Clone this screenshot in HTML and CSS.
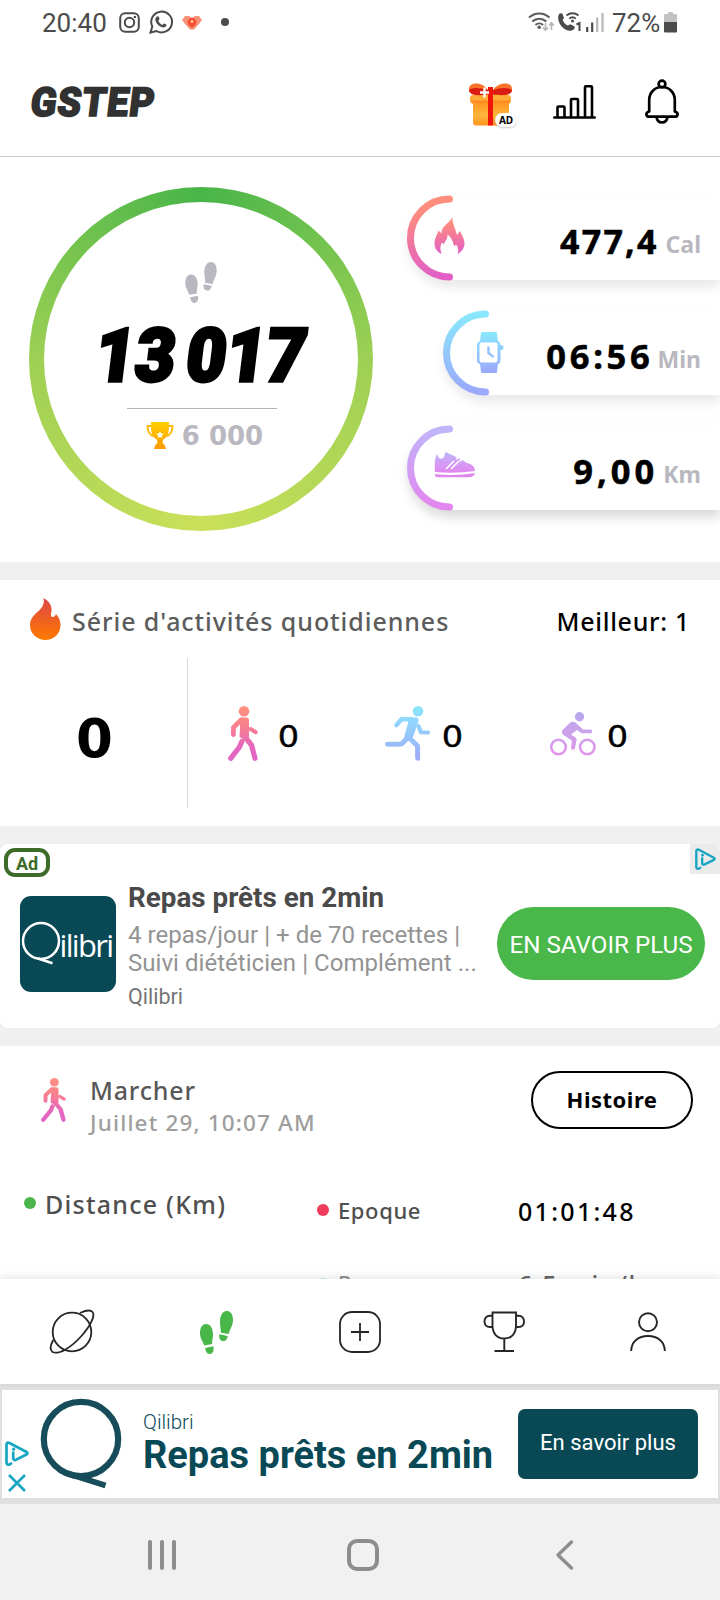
FILE: index.html
```html
<!DOCTYPE html>
<html lang="fr">
<head>
<meta charset="utf-8">
<title>GStep</title>
<link rel="stylesheet" href="styles.css">
</head>
<body>
<svg class="defs" width="0" height="0" aria-hidden="true">
  <defs>
    <linearGradient id="pink" x1="0" y1="0" x2="0" y2="1"><stop offset="0" stop-color="#ff8f7d"/><stop offset=".2" stop-color="#fd8a80"/><stop offset="1" stop-color="#e15fc6"/></linearGradient>
    <linearGradient id="blue" x1="0" y1="0" x2="0" y2="1"><stop offset="0" stop-color="#89e8fd"/><stop offset="1" stop-color="#9ba8fb"/></linearGradient>
    <linearGradient id="violet" x1="0" y1="0" x2="0" y2="1"><stop offset="0" stop-color="#c0b5fa"/><stop offset="1" stop-color="#e386ef"/></linearGradient>
    <linearGradient id="bike" gradientUnits="userSpaceOnUse" x1="0" y1="0" x2="0" y2="44"><stop offset="0" stop-color="#b6aaec"/><stop offset="1" stop-color="#e295ea"/></linearGradient>
    <linearGradient id="walk" gradientUnits="userSpaceOnUse" x1="0" y1="0" x2="0" y2="55"><stop offset="0" stop-color="#ff9180"/><stop offset=".35" stop-color="#f9818c"/><stop offset=".75" stop-color="#e466bf"/><stop offset="1" stop-color="#e266c6"/></linearGradient>
    <linearGradient id="run" gradientUnits="userSpaceOnUse" x1="0" y1="0" x2="0" y2="55"><stop offset="0" stop-color="#89e8fd"/><stop offset="1" stop-color="#a0a9f9"/></linearGradient>
    <linearGradient id="gold" x1="0" y1="0" x2="0" y2="1"><stop offset="0" stop-color="#fdd000"/><stop offset="1" stop-color="#fd9a08"/></linearGradient>
    <linearGradient id="fire" x1="0" y1="0" x2="0" y2="1"><stop offset="0" stop-color="#dc4646"/><stop offset="1" stop-color="#ff7a00"/></linearGradient>
    <linearGradient id="box" x1="0" y1="0" x2="0" y2="1"><stop offset="0" stop-color="#ff9420"/><stop offset=".55" stop-color="#ffb53c"/><stop offset="1" stop-color="#ff9420"/></linearGradient>
    <symbol id="steps" viewBox="0 0 33 43">
      <path d="M6 13C1.800 13 0 17.500 0 22c0 5.500 3 8.500 4.200 12.400l8-1.400c-.4-3.500.8-6 .8-9.500C13 17.500 10.500 13 6 13z"/>
      <path d="M5.300 37l8-1.700c.8 3.600.1 7.200-3.300 7.600-3.100.3-4.700-2.700-4.700-5.900z"/>
      <path d="M27 0c4.200 0 6 4.500 6 9 0 5.500-3 8.500-4.200 14.100l-8-1.400c.4-3.500-.8-6-.8-10.500C20 4.500 22.500 0 27 0z"/>
      <path d="M19.400 23.300l8.300 1.600c-.4 3.500-2.200 5.600-5 5.100-3-.5-3.900-3.400-3.300-6.700z"/>
    </symbol>
    <symbol id="walker" viewBox="0 0 30 55">
      <circle cx="16" cy="5.300" r="5.300" fill="url(#walk)"/>
      <path fill="url(#walk)" d="M12.500 11.500H18q3 0 3 3V31l-3 3.500L11.500 31z"/>
      <g fill="none" stroke="url(#walk)" stroke-linecap="round" stroke-linejoin="round"><path stroke-width="4.800" d="M13 14L5.500 21.500 5.400 28.500"/><path stroke-width="5.200" d="M17 31l6.500 8L27 52.300M13.800 35.500L11.500 41 2.700 52.300"/><path stroke-width="4" d="M22.500 23l5.200 3.300"/></g>
    </symbol>
    <symbol id="choices" viewBox="0 0 24 25">
      <path d="M6 22.500c-2 2-4.500 1.500-4.500-1V3.500C1.500 1.700 3 1.200 4.500 2l17 9c1.300.8 1.300 1.700 0 2.500L11 18.700c-2 .9-2.800-.1-2.800-1.700v-5.500" fill="none" stroke="#17a5c2" stroke-width="2.700" stroke-linecap="round" stroke-linejoin="round"/>
      <circle cx="8.600" cy="8.200" r="1.600" fill="#17a5c2"/>
    </symbol>
  </defs>
</svg>

<div class="status">
  <span class="status-text">20:40</span>
  <svg class="st-insta" width="21" height="21" viewBox="0 0 21 21" fill="none" stroke="#4b4b4b"><rect x="1.200" y="1.200" width="18.600" height="18.600" rx="5" stroke-width="2"/><circle cx="10.500" cy="10.500" r="4.700" stroke-width="2"/><circle cx="15.900" cy="5" r="1.300" fill="#4b4b4b" stroke="none"/></svg>
  <svg class="st-wa" width="24" height="24" viewBox="0 0 24 24"><path d="M1.500 22.500l1.800-6A10.400 10.400 0 1 1 7.500 21z" fill="none" stroke="#4b4b4b" stroke-width="2"/><path d="M8.200 6.500c1.400-.6 2 1 2.300 2.600L9.300 11c.9 1.900 2.200 3.100 4 3.900l1.600-1.500c2.200.5 3 1.200 2.400 2.400-1 2-3.300 2.200-6 .7-2.600-1.500-4.600-4-5-6.500-.2-1.500.6-2.900 1.900-3.500z" fill="#4b4b4b"/></svg>
  <svg class="st-heart" width="20" height="14" viewBox="0 0 20 14"><path d="M0 4l3-4h4l3 2 3-2h4l3 4-3 4-5 5.500h-4L3 8z" fill="#f9927b"/><path d="M5.500 5L8 2h4l2.500 3-1 4L10 12 6.500 9z" fill="#f4502f"/><circle cx="10" cy="5.500" r="1.300" fill="#ffd9c4"/></svg>
  <span class="st-dot"></span>
  <svg class="st-wifi" width="26" height="20" viewBox="0 0 26 20" fill="none" stroke="#5a5a5a" stroke-width="2"><path d="M1 5.500c6-5.500 14.500-5.500 20.500 0M4.300 9.500c4-3.700 10-3.700 14 0M7.500 13c2.200-2 5.400-2 7.600 0"/><circle cx="11.200" cy="15.300" r="1.800" fill="#5a5a5a" stroke="none"/><path d="M17.500 11v7m-2.500-2.500l2.500 2.800 2.500-2.800M23.500 18v-7m-2.300 2.500l2.300-2.800 2.300 2.800" stroke="#b4b4b4" stroke-width="1.600"/></svg>
  <svg class="st-call" width="24" height="20" viewBox="0 0 24 20"><path d="M.8 2.500C2 .8 4 .8 4.800 2.600L6 6 4.600 8c1.200 2.800 3 4.600 5.300 5.600l2.300-1.400 4 2c1 .7.700 2.300-.8 3.600-2 1.500-5 1.400-8-.2C2.500 14.800-1.400 7.800.8 2.500z" fill="#4b4b4b"/><path d="M8.500 3.500c3.500-3 8.500-3 12 0M11.200 6.600c2-1.600 4.600-1.600 6.600 0" fill="none" stroke="#4b4b4b" stroke-width="1.800"/><circle cx="14.500" cy="9" r="1.500" fill="#4b4b4b"/><path d="M18.500 12.500l3-1.500v8" fill="none" stroke="#4b4b4b" stroke-width="2"/></svg>
  <svg class="st-signal" width="18" height="19" viewBox="0 0 18 19"><path d="M1.200 14v5M6.200 9.500V19" stroke="#4b4b4b" stroke-width="2.200"/><path d="M11.200 4.500V19M16.500 0v19" stroke="#b8b8b8" stroke-width="2.200"/></svg>
  <span class="status-text st-pct">72%</span>
  <svg class="st-bat" width="13" height="21" viewBox="0 0 13 21"><path d="M4 0h5v2h3q1 0 1 1v7H0V3q0-1 1-1h3z" fill="#c3c3c3"/><path d="M0 10h13v9.500q0 1-1 1H1q-1 0-1-1z" fill="#4b4b4b"/></svg>
</div>

<header class="header">
  <h1 class="brand"><span>GSTEP</span></h1>
  <div class="gift">
    <svg width="43" height="43" viewBox="0 0 43 43"><rect x="4" y="19" width="36" height="23.500" rx="3" fill="url(#box)"/><rect x="1" y="12" width="41" height="8.500" rx="3" fill="#ffab38"/><path d="M2 17.500h39v3H3z" fill="#fd8b20"/><path d="M0 6C0 1 5 0 9 .5c5 .8 8 4 10 6.500h5c2-3 5-5.700 10-6.500 4-.5 9 .5 9 5.500 0 4-3 6-8 6H8c-5 0-8-2-8-6z" fill="#f97328"/><path d="M0 7c4-3 12-2 19 0v4c-6 2-19 2-19-4zM24 7c6-2 15-3 19 0 0 6-13 6-19 4z" fill="#d91d12"/><rect x="19" y="4" width="5" height="38.500" fill="#ee1509"/><path d="M15.500 4.500v10M11 9.500h9" stroke="#fff" stroke-width="2.300"/></svg>
    <span class="gift-ad">AD</span>
  </div>
  <svg class="ic-bars" width="43" height="34" viewBox="0 0 43 34" fill="none" stroke="#000" stroke-width="2.600" stroke-linecap="round" stroke-linejoin="round"><path d="M1.300 32.500h40.400M4.500 32V22.500q0-1 1-1h5q1 0 1 1V32M18 32V15q0-1 1-1h5q1 0 1 1v17M32 32V2.300q0-1 1-1h5q1 0 1 1V32"/></svg>
  <svg class="ic-bell" width="34" height="46" viewBox="0 0 34 46" fill="none" stroke="#000" stroke-width="2.700" stroke-linecap="round" stroke-linejoin="round"><circle cx="17" cy="5" r="3.400"/><path d="M4.200 32.500V21c0-7.500 5.500-13 12.800-13s12.800 5.500 12.800 13v11.500c2 .7 3 1.600 2.800 3-.2 1.400-1.200 2.200-2.600 2.200H4c-1.400 0-2.400-.8-2.600-2.200-.2-1.400.8-2.300 2.800-3zM11.500 38c.5 3.500 2.500 5.500 5.500 5.500s5-2 5.500-5.500"/></svg>
</header>

<section class="stats">
  <div class="ring">
    <div class="ring-in">
      <svg class="ring-steps" width="32" height="41" fill="#b9b7c0"><use href="#steps"/></svg>
      <div class="count"><span>13</span><span>017</span></div>
      <div class="rule"></div>
      <div class="goal">
        <svg width="28" height="28" viewBox="0 0 28 28"><path d="M6 4H1.500c0 6 2 9 6 10M22 4h4.500c0 6-2 9-6 10" fill="none" stroke="#fdbb10" stroke-width="1.900"/><path d="M5 0h18c0 9 0 13.500-5 17-1.500 1-1.500 2.500-1 4.500 1.500 1 2.500 2.500 3 5.500H8c.5-3 1.500-4.500 3-5.500.5-2 .5-3.500-1-4.500C5 13.500 5 9 5 0z" fill="url(#gold)"/><path d="M14 9l1.100 2.500 2.700.2-2 1.800.6 2.700-2.400-1.400-2.400 1.400.6-2.700-2-1.800 2.700-.2z" fill="#fff"/></svg>
        <span>6 000</span>
      </div>
    </div>
  </div>
  <div class="cards">
    <div class="card">
      <svg class="arc" width="46" height="86" viewBox="0 0 46 86"><path d="M41.500 4A39 39 0 0 0 41.500 82" fill="none" stroke="url(#pink)" stroke-width="7" stroke-linecap="round"/></svg>
      <svg class="ic-flames" width="31" height="37" viewBox="0 0 31 37"><path fill="url(#pink)" d="M18.500 0c-.5 6 2.500 10 4.500 18l3-4c1 3 4.500 7 4.500 12.500 0 4.500-3 8.500-7 10.500 1.500-3 .5-7-1.500-9.500l-1.800 2C19.500 25 17 20 13.500 17.500c.5 4.500-3 6.500-3.500 10l-1.800-2c-2 2-2.500 8-.2 11.500C3.500 35.500.5 31.500.5 26.500c0-5.500 2.500-8 4-13l3 3C7 9.500 15.500 6 18.500 0z"/></svg>
      <strong class="v1">477,4</strong><span class="u1">Cal</span>
    </div>
    <div class="card card-mid">
      <svg class="arc" width="46" height="86" viewBox="0 0 46 86"><path d="M41.500 4A39 39 0 0 0 41.500 82" fill="none" stroke="url(#blue)" stroke-width="7" stroke-linecap="round"/></svg>
      <svg class="ic-watch" width="27" height="41" viewBox="0 0 27 41"><path fill="url(#blue)" fill-rule="evenodd" d="M5 0h14q1 0 1 1l1 8q2.500 1 2.500 4 3-.3 3 2.500t-3 2.500V28q0 3-2.500 4l-1 8q0 1-1 1H5q-1 0-1-1l-1-8q-3-1-3-4V13q0-3 3-4l1-8q0-1 1-1zM4.500 10.500q-2 0-2 2v16q0 2 2 2h14q2 0 2-2v-16q0-2-2-2z"/><path d="M11.500 14.500v6.500l5 4" fill="none" stroke="#92c3fb" stroke-width="2.400"/></svg>
      <strong class="v2">06:56</strong><span class="u2">Min</span>
    </div>
    <div class="card card-low">
      <svg class="arc" width="46" height="86" viewBox="0 0 46 86"><path d="M41.500 4A39 39 0 0 0 41.500 82" fill="none" stroke="url(#violet)" stroke-width="7" stroke-linecap="round"/></svg>
      <svg class="ic-shoe" width="41" height="26" viewBox="0 0 41 26"><path fill="url(#violet)" d="M3 2l2 4q3 2 5-1l1-4q1-1.500 3 0l16 8q2 2 5 2.500 6 2 6 7.500Q21 22 1 20C.5 14 .5 6 3 2z"/><path d="M.8 22q20 2.200 40.200-1-.5 4-6 4.300H4q-3.200 0-3.200-3.300z" fill="#df88ea"/><path d="M12 17l8-8M17 17l8-8M25 5l-3 2M28.500 7l-3 2" stroke="#fff" stroke-width="1.600"/></svg>
      <strong class="v3">9,00</strong><span class="u3">Km</span>
    </div>
  </div>
</section>

<section class="streak">
  <div class="streak-head">
    <svg width="31" height="42" viewBox="0 0 31 42"><path fill="url(#fire)" d="M13.500 0C19 3 22 7.500 21.500 13c-.2 2-1.200 4.500 0 5.500 2 1.500 4-.5 4.500-2.500 3 3 4.500 7 4.500 11 0 8.500-6.500 15-15 15S0 35.500 0 27C0 21 4 17 8 13.500 12 10 15 6 13.500 0z"/></svg>
    <h2>Série d'activités quotidiennes</h2>
    <span class="best">Meilleur: 1</span>
  </div>
  <div class="streak-body">
    <div class="total">0</div>
    <div class="acts">
      <div class="act"><svg width="30" height="55"><use href="#walker"/></svg><span>0</span></div>
      <div class="act act-run"><svg width="45" height="55" viewBox="0 0 45 55"><circle cx="33" cy="5.300" r="5.300" fill="url(#run)"/><path fill="url(#run)" d="M22 11.500h8.500c3 0 3.500 2 2.700 4.500L28 31l-4.500 4-4.500-3.500 4.500-16z"/><g fill="none" stroke="url(#run)" stroke-linecap="round" stroke-linejoin="round"><path stroke-width="4.600" d="M26 13.300H16.500L11.500 19"/><path stroke-width="5" d="M24.500 32l8 8 .2 12.300M22 32.500L16.500 38l-14 .2"/><path stroke-width="4" d="M33.500 20l2.300 6.300 7.200.2"/></g></svg><span>0</span></div>
      <div class="act act-bike"><svg width="46" height="44" viewBox="0 0 46 44"><circle cx="29.500" cy="4.700" r="4.700" fill="url(#bike)"/><path fill="url(#bike)" d="M21 10q3-1 5 1l7 6.500h7c3 0 3 3.800 0 3.800h-8.500L27 18l-6 4.500 4.500 3c1 .7 1.300 1.800 1 3L25 36c-.5 2.500-4.300 2-4-.5l.8-7-8.300-5.500q-3.500-3 0-6z"/><g fill="none" stroke="url(#bike)" stroke-width="2.600"><circle cx="8.500" cy="35" r="7.300"/><circle cx="37.300" cy="35" r="7.300"/></g></svg><span>0</span></div>
    </div>
  </div>
</section>

<section class="ad">
  <span class="ad-tag">Ad</span>
  <span class="ad-info"><svg width="21" height="22"><use href="#choices"/></svg></span>
  <div class="ad-logo"><svg width="96" height="96" viewBox="0 0 96 96"><circle cx="21" cy="45" r="18" fill="none" stroke="#fff" stroke-width="2.500"/><path d="M18 62.500l14.500 4.700" stroke="#fff" stroke-width="2.700"/><text class="logo-text" x="39.500" y="61" textLength="54.500">ilibri</text></svg></div>
  <div class="ad-copy">
    <h3>Repas prêts en 2min</h3>
    <p>4 repas/jour | + de 70 recettes |<br>Suivi diététicien | Complément ...</p>
    <small>Qilibri</small>
  </div>
  <a class="ad-cta">EN SAVOIR PLUS</a>
</section>

<section class="activity">
  <div class="activity-head">
    <svg width="25" height="44" viewBox="0 0 30 55" preserveAspectRatio="none"><use href="#walker" width="30" height="55"/></svg>
    <div class="activity-title"><h3>Marcher</h3><p>Juillet 29, 10:07 AM</p></div>
    <a class="history">Histoire</a>
  </div>
  <div class="metrics">
    <div class="distance"><i class="dot green"></i><span>Distance (Km)</span></div>
    <div class="rows">
      <div class="row"><i class="dot red"></i><span class="k">Epoque</span><span class="v">01:01:48</span></div>
      <div class="row faded"><i class="dot sky"></i><span class="k">Pace</span><span class="v">6,5 min/km</span></div>
    </div>
  </div>
</section>

<nav class="tabs">
  <div><svg width="46" height="46" viewBox="0 0 46 46" fill="none" stroke="#262626" stroke-width="1.800"><circle cx="23" cy="23" r="19.300"/><path d="M4 31.500c-3 5.500-3 9.500-.5 11.500 6 3 18-4 28.500-15.500C41.500 17 46.500 6.500 43.500 3c-2-2.300-6.500-1.700-12 .8" stroke-linecap="round"/></svg></div>
  <div><svg width="33" height="43" fill="#48b648"><use href="#steps"/></svg></div>
  <div><svg width="42" height="42" viewBox="0 0 42 42" fill="none" stroke="#262626" stroke-width="1.800"><rect x="1" y="1" width="40" height="40" rx="12"/><path d="M21 12v18M12 21h18"/></svg></div>
  <div><svg width="42" height="42" viewBox="0 0 42 42" fill="none" stroke="#262626" stroke-width="1.900"><path d="M9.500 1.500h23.500v13c0 7.500-4 13-11.700 13S9.500 22 9.500 14.500zM9.500 4.800H7c-3.500 0-5.500 2.500-5.500 5.700S3.500 16 7 16h2.500M33 4.800h2.500c3.500 0 5.500 2.500 5.500 5.700S39 16 35.500 16H33M21.300 27.500v12.500M11.500 40h19.500"/></svg></div>
  <div><svg width="36" height="40" viewBox="0 0 36 40" fill="none" stroke="#262626" stroke-width="1.900"><circle cx="18" cy="10.300" r="9"/><path d="M1.200 39C1.200 29.500 8.500 24 18 24s16.800 5.500 16.800 15"/></svg></div>
</nav>

<section class="banner">
  <div class="banner-marks">
    <svg width="24" height="25"><use href="#choices"/></svg>
    <svg width="18" height="18" viewBox="0 0 18 18"><path d="M1 1l16 16M17 1L1 17" stroke="#17a5c2" stroke-width="2.600"/></svg>
  </div>
  <svg class="banner-q" width="82" height="92" viewBox="0 0 82 92" fill="none" stroke="#174d5a"><circle cx="41" cy="41" r="37.200" stroke-width="6.200"/><path d="M26 75l39.500 12.500" stroke-width="6"/></svg>
  <div class="banner-copy"><span>Qilibri</span><strong>Repas prêts en 2min</strong></div>
  <a class="banner-cta">En savoir plus</a>
</section>

<footer class="sysnav">
  <svg width="28" height="30" viewBox="0 0 28 30" stroke="#8d8d8d" stroke-width="4" stroke-linecap="round"><path d="M2 2v26M14 2v26M26 2v26"/></svg>
  <svg width="32" height="32" viewBox="0 0 32 32"><rect x="2" y="2" width="28" height="28" rx="8" fill="none" stroke="#8d8d8d" stroke-width="4"/></svg>
  <svg width="18" height="30" viewBox="0 0 18 30" fill="none" stroke="#8d8d8d" stroke-width="3.400" stroke-linecap="round" stroke-linejoin="round"><path d="M15.500 2L2 15l13.500 13"/></svg>
</footer>
</body>
</html>
```

FILE: styles.css
```css
* { box-sizing: border-box; margin: 0; padding: 0; }
body { width: 720px; height: 1600px; overflow: hidden; display: flex; flex-direction: column; background: #f0f0f0; font-family: "Noto Sans", sans-serif; color: #000; }
body > * { flex: none; }
svg { display: block; flex: none; overflow: visible; }
.defs { position: absolute; }
h1, h2, h3 { font-weight: inherit; }
span, strong, p, h2, h3, a { white-space: nowrap; }

/* Status bar */
.status { height: 46px; background: #fff; display: flex; align-items: flex-start; padding-left: 42px; font-family: Roboto, sans-serif; }
.status-text { font-size: 26px; line-height: 46px; color: #4b4b4b; width: 66px; }
.st-insta { margin: 12px 0 0 11px; }
.st-wa { margin: 10px 0 0 9px; }
.st-heart { margin: 16px 0 0 9px; }
.st-dot { width: 8px; height: 8px; border-radius: 50%; background: #4b4b4b; margin: 18px 0 0 19px; }
.st-wifi { margin: 12px 0 0 299px; }
.st-call { margin: 12px 0 0 4px; }
.st-signal { margin: 13px 0 0 4px; }
.st-pct { width: 50px; margin-left: 8px; }
.st-bat { margin: 12px 0 0 2px; }

/* Header */
.header { height: 111px; background: #fff; border-bottom: 1px solid #c8c8c8; display: flex; align-items: flex-start; }
.brand { width: 126px; margin: 32px 0 0 31px; font: 900 40px/50px Roboto, sans-serif; color: #313131; -webkit-text-stroke: 1.6px #313131; }
.brand span { display: inline-block; transform-origin: 0 80%; transform: skewX(-7deg) scaleX(.95); letter-spacing: 1px; margin-left: -2px; }
.gift { position: relative; width: 43px; margin: 37px 0 0 312px; }
.gift-ad { position: absolute; left: 26px; top: 30px; width: 22px; height: 14px; border-radius: 7px; background: #fff; box-shadow: 0 1px 2px #0003; font: bold 10px/14px "Noto Sans", sans-serif; text-align: center; }
.ic-bars { margin: 39px 0 0 41px; }
.ic-bell { margin: 33px 0 0 49px; }

/* Summary */
.stats { height: 405px; background: #fff; display: flex; overflow: hidden; }
.ring { width: 344px; height: 344px; margin: 30px 0 0 29px; padding: 15px; border-radius: 50%; background: conic-gradient(#48b549, #9dd054 90deg, #cbe05a 180deg, #9dd054 270deg, #48b549); }
.ring-in { height: 314px; border-radius: 50%; background: #fff; display: flex; flex-direction: column; align-items: center; padding-top: 60px; }
.count { height: 90px; margin: 8px 0 0 0; display: flex; gap: 12px; font: 900 74px/90px Roboto, sans-serif; transform: skewX(-7deg) scaleX(.93); -webkit-text-stroke: 3.5px #000; }
.rule { width: 150px; height: 1px; background: #b5b5b5; margin: 7px 0 0 2px; }
.goal { display: flex; align-items: flex-start; gap: 8px; margin: 13px 0 0 7px; font: bold 26px/28px "DejaVu Sans", sans-serif; color: #b9b7c0; }
.cards { flex: 1; margin-left: 35px; padding-top: 38px; display: flex; flex-direction: column; gap: 30px; }
.card { height: 85px; border-radius: 43px 0 0 43px; background: #fff; display: flex; align-items: flex-start; box-shadow: 0 7px 12px #00000018; padding-right: 19px; }
.card-mid { margin-left: 36px; }
.card-low { box-shadow: 0 7px 12px #00000028; }
.card strong { margin-left: auto; font-size: 34px; line-height: 92px; -webkit-text-stroke: .5px #000; }
.card span { font-size: 23px; font-weight: bold; line-height: 98px; color: #b9b7c0; }
.arc { width: 46px; }
.ic-flames { margin: 22px 0 0 -20px; }
.ic-watch { margin: 22px 0 0 -13px; }
.ic-shoe { margin: 27px 0 0 -20px; }
.card .v1 { letter-spacing: 2.2px; margin-right: 7px; }
.card .v2 { letter-spacing: 3.7px; margin-right: 4px; font-size: 34.5px; }
.card .v3 { letter-spacing: 4px; margin-right: 5px; font-size: 34.5px; }

/* Streak */
.streak { height: 246px; margin-top: 18px; background: #fff; }
.streak-head { display: flex; height: 78px; padding: 18px 30px 0 30px; }
.streak-head h2 { font-size: 25px; line-height: 46px; color: #5c5c5c; margin-left: 11px; font-weight: 500; letter-spacing: .93px; }
.best { margin-left: auto; font-size: 25px; line-height: 46px; font-weight: 500; letter-spacing: .7px; }
.streak-body { display: flex; height: 150px; }
.total { width: 188px; border-right: 1px solid #d8d8d8; text-align: center; padding-left: 2px; font: bold 53px/162px "DejaVu Sans", sans-serif; }
.acts { display: flex; padding: 48px 0 0 40px; }
.act { display: flex; width: 157px; }
.act span { font: 30px/62px "DejaVu Sans", sans-serif; margin-left: 20px; transform: scaleX(1.12); transform-origin: 10% 50%; -webkit-text-stroke: .4px #000; }
.act-run { width: 165px; }
.act-run span { margin-left: 12px; }
.act-bike svg { margin-top: 6px; }
.act-bike span { margin-left: 11px; }

/* Native ad */
.ad { position: relative; height: 184px; margin-top: 18px; border-radius: 8px; background: #fff; display: flex; font-family: Roboto, sans-serif; }
.ad-tag { position: absolute; left: 4px; top: 4px; width: 46px; height: 29px; border: 4px solid #3d6b29; border-radius: 11px; font: bold 18px/23px Roboto, sans-serif; color: #3d6b29; text-align: center; }
.ad-info { position: absolute; right: 0; top: 0; width: 30px; height: 30px; background: #ebebeb; padding: 4px 0 0 5px; border-radius: 0 8px 0 0; }
.ad-logo { width: 96px; height: 96px; margin: 52px 0 0 20px; border-radius: 11px; background: #094956; }
.logo-text { font: 31px "Open Sans", sans-serif; fill: #fff; }
.ad-copy { width: 356px; margin: 38px 0 0 12px; }
.ad-copy h3 { font-size: 27.8px; font-weight: bold; line-height: 32px; color: #4a4a4a; }
.ad-copy p { font-size: 24px; line-height: 28px; color: #939393; margin-top: 7px; letter-spacing: .04px; }
.ad-copy small { display: block; font-size: 21.5px; line-height: 26px; color: #757575; margin-top: 7px; }
.ad-cta { width: 208px; height: 73px; margin: 63px 0 0 13px; border-radius: 37px; background: #49b749; color: #fff; font-size: 24.2px; line-height: 76px; text-align: center; }

/* Last activity */
.activity { height: 233px; margin-top: 18px; background: #fff; overflow: hidden; }
.activity-head { display: flex; height: 125px; padding: 25px 27px 0 41px; }
.activity-head > svg { margin-top: 7px; }
.activity-title { margin-left: 24px; font-weight: 500; }
.activity-title h3 { font-size: 25px; line-height: 38px; color: #585858; letter-spacing: .8px; }
.activity-title p { font-size: 22.5px; line-height: 27px; color: #9e9e9e; letter-spacing: 1.15px; }
.history { margin-left: auto; width: 162px; height: 58px; border: 2px solid #000; border-radius: 29px; font-size: 22px; line-height: 53px; font-weight: bold; text-align: center; letter-spacing: .5px; }
.metrics { display: flex; font-weight: 500; color: #4f4f4f; }
.dot { width: 12px; height: 12px; border-radius: 50%; flex: none; }
.green { background: #4ab54a; }
.red { background: #ef3b5c; }
.sky { background: #a9def2; }
.distance { width: 317px; padding-left: 24px; display: flex; font-size: 25px; line-height: 40px; margin-top: 13px; letter-spacing: 1.25px; }
.distance .dot { margin: 13px 9px 0 0; }
.rows { flex: 1; padding-top: 20px; display: flex; flex-direction: column; gap: 32px; }
.row { display: flex; height: 40px; line-height: 38px; }
.row .dot { margin: 13px 9px 0 0; }
.k { width: 180px; font-size: 22px; letter-spacing: .6px; }
.v { font-size: 25px; color: #000; line-height: 41px; letter-spacing: 2.3px; }
.faded { opacity: .6; }
.faded .dot { margin-top: 15px; }
.faded .k { line-height: 40px; }
.faded .v { letter-spacing: 1.6px; line-height: 43px; }

/* Tabs */
.tabs { position: relative; height: 105px; background: #fff; box-shadow: 0 -2px 8px #0000001c; display: grid; grid-template-columns: repeat(5, 1fr); place-items: center; padding-top: 1px; }

/* Anchored banner */
.banner { height: 120px; border: solid #e0e0e0; border-width: 6px 2px; background: #fff; display: flex; font-family: Roboto, sans-serif; color: #094956; }
.banner-marks { width: 38px; padding: 51px 0 0 3px; }
.banner-marks svg + svg { margin: 8px 0 0 3px; }
.banner-q { margin-top: 8px; }
.banner-copy { width: 374px; margin: 18px 0 0 21px; }
.banner-copy span { display: block; font-size: 20.5px; font-weight: 300; line-height: 28px; }
.banner-copy strong { display: block; font-size: 38px; line-height: 38px; }
.banner-cta { width: 180px; height: 70px; margin: 19px 0 0 1px; border-radius: 7px; background: #094956; color: #fff; font-size: 22px; line-height: 67px; text-align: center; }

/* System navigation */
.sysnav { height: 96px; background: #f1f1f1; display: flex; align-items: center; padding: 6px 0 0 148px; }
.sysnav svg:nth-child(2) { margin-left: 171px; }
.sysnav svg:nth-child(3) { margin-left: 177px; }
```
